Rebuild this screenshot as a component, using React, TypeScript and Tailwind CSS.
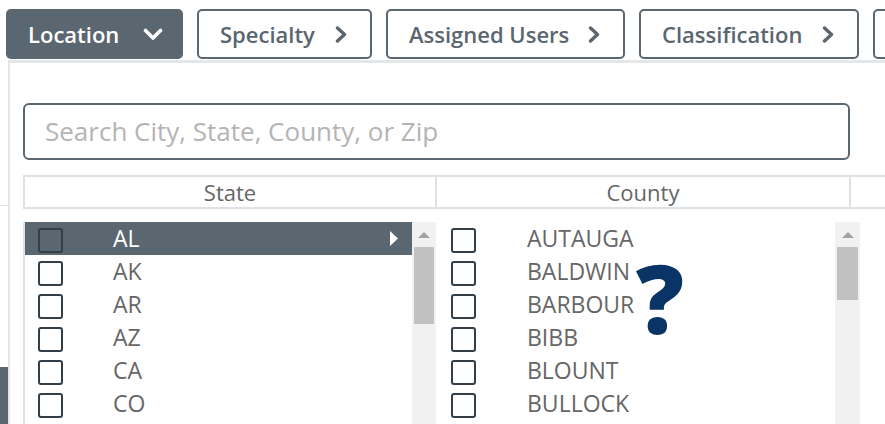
import React from "react";

const font = { fontFamily: '"Open Sans", "Noto Sans", sans-serif' };

function ChevronDown() {
  return (
    <svg width="20" height="13" viewBox="0 0 20 13" fill="none">
      <path d="M2.5 2.5 L10 10 L17.5 2.5" stroke="white" strokeWidth="3.6" strokeLinecap="round" strokeLinejoin="round" />
    </svg>
  );
}

function ChevronRight() {
  return (
    <svg width="13" height="17" viewBox="0 0 13 17" fill="none">
      <path d="M2.5 2 L9.5 8.5 L2.5 15" stroke="#5a6670" strokeWidth="3.4" strokeLinecap="round" strokeLinejoin="round" />
    </svg>
  );
}

function FilterButton({ label, width }: { label: string; width: string }) {
  return (
    <div
      className={`${width} h-[50px] shrink-0 flex items-center justify-between pl-[21px] pr-[22px] border-2 border-[#5a6670] rounded-[5px] text-[22px] font-semibold text-[#5a6670]`}
    >
      <span>{label}</span>
      <ChevronRight />
    </div>
  );
}

function Checkbox() {
  return <div className="w-[25px] h-[25px] shrink-0 border-2 border-[#333f48] rounded-[3px]" />;
}

function Scrollbar({ thumb, width }: { thumb: string; width: string }) {
  return (
    <div className={`${width} shrink-0 bg-[#f1f1f1] flex flex-col items-center px-[2px]`}>
      <div className="h-[25px] w-full flex items-center justify-center">
        <svg width="12" height="6" viewBox="0 0 12 6">
          <path d="M0 6 L6 0 L12 6 Z" fill="#a3a3a3" />
        </svg>
      </div>
      <div className={`${thumb} w-full bg-[#c1c1c1]`} />
    </div>
  );
}

const states = ["AL", "AK", "AR", "AZ", "CA", "CO"];
const counties = ["AUTAUGA", "BALDWIN", "BARBOUR", "BIBB", "BLOUNT", "BULLOCK"];

export default function App() {
  return (
    <div style={font} className="relative w-[885px] h-[424px] overflow-hidden bg-white">
      {/* toolbar */}
      <div className="flex gap-[14px] pl-[6px] pt-[9px]">
        <div className="w-[177px] h-[50px] shrink-0 flex items-center justify-between pl-[22px] pr-[20px] bg-[#5b6770] rounded-[5px] text-[22px] font-semibold text-white">
          <span>Location</span>
          <ChevronDown />
        </div>
        <FilterButton label="Specialty" width="w-[175px]" />
        <FilterButton label="Assigned Users" width="w-[239px]" />
        <FilterButton label="Classification" width="w-[220px]" />
        <div className="w-[160px] h-[50px] shrink-0 border-2 border-[#5a6670] rounded-[5px]" />
      </div>

      {/* page content behind the dropdown */}
      <div className="w-[8px] flex flex-col">
        <div className="h-[147px] border-b border-[#e3e3e3]" />
        <div className="h-[161px]" />
        <div className="h-[60px] bg-[#5b6770]" />
      </div>

      {/* dropdown panel */}
      <div className="absolute left-[8px] top-[60px] right-0 bottom-0 bg-white border-l-2 border-t-[3px] border-[#e3e7ea] pl-[13px]">
        <div className="mt-[40px] w-[827px] h-[57px] border-2 border-[#5a6670] rounded-[6px] flex items-center pl-[20px] text-[26px] text-[#b4b4b4]">
          Search City, State, County, or Zip
        </div>

        {/* header */}
        <div className="mt-[15px] flex h-[34px] border-l-2 border-y-2 border-[#dde2e7] text-[22px] text-[#666666]">
          <div className="w-[412px] border-r-2 border-[#dde2e7] flex items-center justify-center">State</div>
          <div className="w-[414px] border-r-2 border-[#dde2e7] flex items-center justify-center">County</div>
          <div className="flex-1" />
        </div>

        {/* lists */}
        <div className="mt-[13px] flex h-[220px]">
          <div className="flex border-l-2 border-[#dde2e7]">
            <div className="w-[387px] flex flex-col">
              {states.map((s, i) => (
                <div
                  key={s}
                  className={`h-[33px] shrink-0 flex items-center pt-[4px] pl-[13px] pr-[14px] text-[23px] ${
                    i === 0 ? "bg-[#5b6770] text-white" : "text-[#666666]"
                  }`}
                >
                  <Checkbox />
                  <span className="ml-[50px] flex-1 leading-none -mt-[4px]">{s}</span>
                  {i === 0 && (
                    <svg width="8" height="15" viewBox="0 0 8 15" className="-mt-[4px]">
                      <path d="M0 0 L8 7.5 L0 15 Z" fill="white" />
                    </svg>
                  )}
                </div>
              ))}
            </div>
            <Scrollbar thumb="h-[77px]" width="w-[24px]" />
          </div>
          <div className="w-[399px] flex flex-col">
            {counties.map((c) => (
              <div key={c} className="h-[33px] shrink-0 flex items-center pt-[4px] pl-[15px] text-[23px] text-[#666666]">
                <Checkbox />
                <span className="ml-[51px] leading-none -mt-[4px]">{c}</span>
              </div>
            ))}
          </div>
          <Scrollbar thumb="h-[53px]" width="w-[25px]" />
        </div>
      </div>

      {/* question mark overlay */}
      <div className="absolute left-[636px] top-[250px] text-[95px] leading-none font-extrabold text-[#0a3366]">?</div>
    </div>
  );
}
